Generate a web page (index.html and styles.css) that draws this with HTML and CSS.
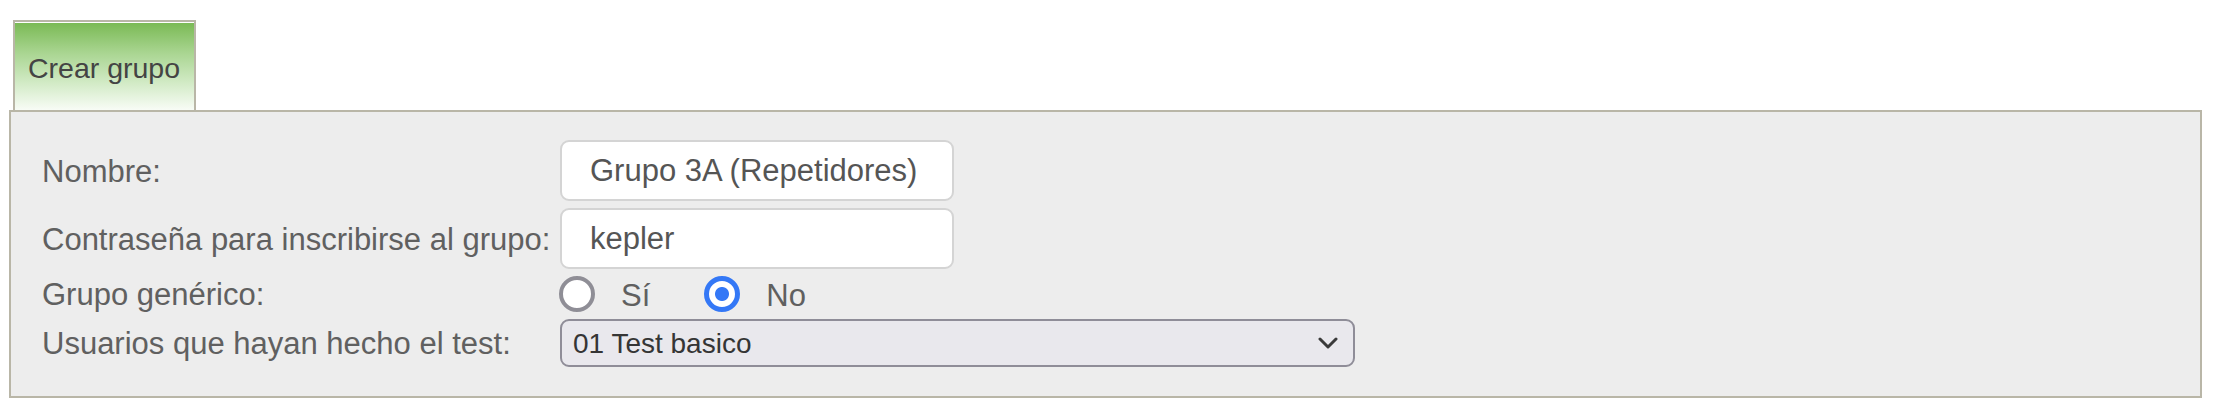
FILE: index.html
```html
<!DOCTYPE html>
<html lang="es">
<head>
<meta charset="utf-8">
<title>Crear grupo</title>
<link rel="stylesheet" href="styles.css">
</head>
<body>
<div class="page">
  <div class="tabs">
    <div class="tab">Crear grupo</div>
  </div>
  <form class="panel">
    <label class="label" for="nombre">Nombre:</label>
    <input class="text-input" id="nombre" type="text" value="Grupo 3A (Repetidores)">

    <label class="label" for="pass">Contraseña para inscribirse al grupo:</label>
    <input class="text-input" id="pass" type="text" value="kepler">

    <span class="label">Grupo genérico:</span>
    <div class="radios">
      <label class="radio-opt"><input class="radio" type="radio" name="gen" value="si"><span class="radio-text">Sí</span></label>
      <label class="radio-opt"><input class="radio" type="radio" name="gen" value="no" checked><span class="radio-text">No</span></label>
    </div>

    <label class="label" for="test">Usuarios que hayan hecho el test:</label>
    <div class="select-wrap">
      <select class="select" id="test">
        <option>01 Test basico</option>
      </select>
      <svg class="chevron" width="20" height="12" viewBox="0 0 20 12" aria-hidden="true">
        <path d="M2 2 L10 10 L18 2" fill="none" stroke="#3a3a3a" stroke-width="3" stroke-linejoin="round" stroke-linecap="round"/>
      </svg>
    </div>
  </form>
</div>
</body>
</html>
```
FILE: styles.css
```css
* { box-sizing: border-box; }

html, body {
  margin: 0;
  padding: 0;
  background: #ffffff;
  font-family: "Liberation Sans", Arial, sans-serif;
}

.page {
  padding: 20px 18px 0 9px;
}

.tabs {
  display: flex;
  padding-left: 4px;
}

.tab {
  height: 90px;
  padding: 30px 14px 0 13px;
  border: 2px solid #b9b6a7;
  border-bottom: none;
  box-shadow: inset 0 1px 0 #ffffff;
  background: linear-gradient(to bottom, #79b953 0%, #a9d591 35%, #d3ebc7 70%, #f8fcf6 100%);
  color: #444444;
  font-size: 28.5px;
  line-height: 32px;
}

.panel {
  display: grid;
  grid-template-columns: 518px auto;
  row-gap: 7px;
  align-items: center;
  justify-items: start;
  margin: 0;
  padding: 28px 20px 29px 31px;
  border: 2px solid #b9b6a7;
  background: #ededed;
}

.label {
  padding-top: 2px;
  color: #606060;
  font-size: 31px;
  line-height: 34px;
  white-space: nowrap;
}

.text-input {
  width: 394px;
  height: 61px;
  margin: 0;
  padding: 0 20px 0 28px;
  border: 2px solid #d4d4d4;
  border-radius: 9px;
  background: #ffffff;
  color: #555555;
  font-family: "Liberation Sans", Arial, sans-serif;
  font-size: 31px;
  outline: none;
}

.radios {
  display: flex;
  align-items: center;
  gap: 54px;
  height: 36px;
  margin-left: -1px;
}

.radio-opt {
  display: flex;
  align-items: center;
  gap: 26px;
  color: #606060;
  font-size: 31px;
  line-height: 32px;
}

.radio-text {
  padding-top: 4px;
}

.radio {
  appearance: none;
  -webkit-appearance: none;
  width: 36px;
  height: 36px;
  margin: 0;
  border: 4px solid #8f8e96;
  border-radius: 50%;
  background: #ffffff;
}

.radio:checked {
  border: 5px solid #3478f6;
  background: radial-gradient(circle, #3478f6 0 6.5px, #ffffff 7.5px);
}

.select-wrap {
  position: relative;
  width: 795px;
  height: 48px;
}

.select {
  appearance: none;
  -webkit-appearance: none;
  width: 100%;
  height: 100%;
  margin: 0;
  padding: 0 40px 0 11px;
  border: 2px solid #8f8d98;
  border-radius: 9px;
  background: #e9e8ed;
  color: #353535;
  font-family: "Liberation Sans", Arial, sans-serif;
  font-size: 28px;
  outline: none;
}

.chevron {
  position: absolute;
  right: 17px;
  top: 18px;
  pointer-events: none;
}
```
